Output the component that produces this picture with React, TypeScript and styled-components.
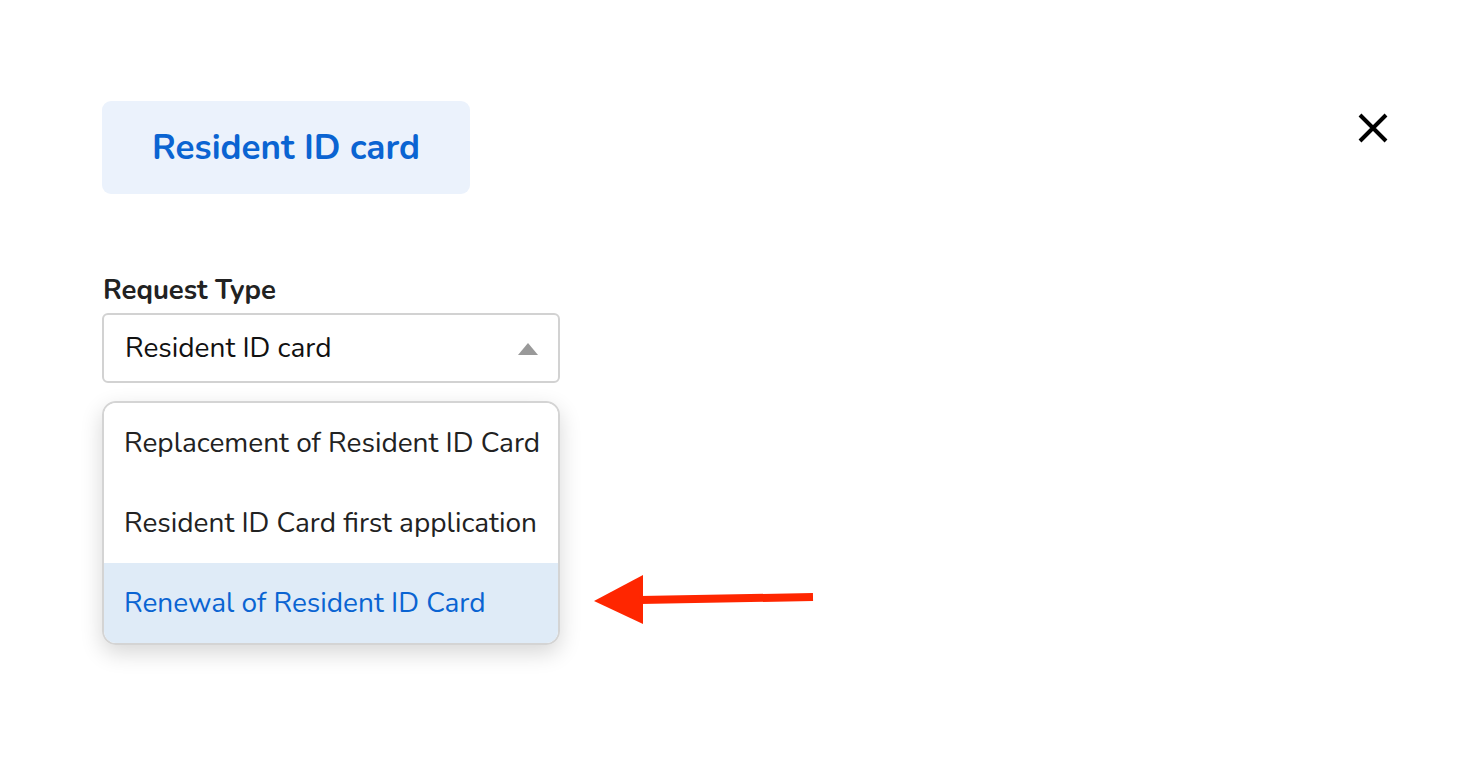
import React from "react";
import styled, { createGlobalStyle } from "styled-components";

const GlobalStyle = createGlobalStyle`
  html, body {
    margin: 0;
    padding: 0;
    background: #ffffff;
  }
  body {
    font-family: "Nunito", Lato, "Open Sans", sans-serif;
    color: #222222;
  }
`;

const Page = styled.div`
  position: relative;
  width: 1460px;
  height: 764px;
  box-sizing: border-box;
  padding: 101px 70px 0 102px;
`;

const Header = styled.div`
  display: flex;
  align-items: flex-start;
  justify-content: space-between;
`;

const TitlePill = styled.div`
  width: 368px;
  height: 93px;
  border-radius: 9px;
  background: #ebf2fc;
  color: #0a64d2;
  font-size: 35px;
  font-weight: 700;
  display: flex;
  align-items: center;
  justify-content: center;
`;

const CloseButton = styled.button`
  margin-top: 10px;
  width: 34px;
  height: 34px;
  padding: 0;
  border: none;
  background: transparent;
  display: flex;
  align-items: center;
  justify-content: center;
  cursor: pointer;
`;

const Field = styled.div`
  margin-top: 80px;
  width: 458px;
  display: flex;
  flex-direction: column;
`;

const Label = styled.div`
  font-size: 27.5px;
  font-weight: 700;
  color: #222222;
  line-height: 32px;
  margin-bottom: 7px;
  margin-left: 1px;
`;

const SelectBox = styled.div`
  height: 70px;
  box-sizing: border-box;
  border: 2px solid #d2d2d2;
  border-radius: 6px;
  display: flex;
  align-items: center;
  justify-content: space-between;
  padding: 0 20px 0 21px;
  font-size: 28px;
  color: #111111;
`;

const Caret = styled.span`
  width: 0;
  height: 0;
  border-left: 10px solid transparent;
  border-right: 10px solid transparent;
  border-bottom: 12px solid #999999;
  margin-top: 2px;
`;

const Menu = styled.ul`
  list-style: none;
  margin: 18px 0 0 0;
  padding: 0;
  border: 2px solid #d4d4d4;
  border-radius: 14px;
  overflow: hidden;
  box-shadow: 0 8px 22px rgba(0, 0, 0, 0.16);
`;

const Option = styled.li<{ $active?: boolean }>`
  height: 80px;
  display: flex;
  align-items: center;
  padding: 0 0 0 20px;
  font-size: 28px;
  color: ${(p) => (p.$active ? "#0a64d2" : "#222222")};
  background: ${(p) => (p.$active ? "#dfebf7" : "#ffffff")};
`;

const Pointer = styled.svg`
  position: absolute;
  left: 590px;
  top: 570px;
`;

const options = [
  "Replacement of Resident ID Card",
  "Resident ID Card first application",
  "Renewal of Resident ID Card",
];

const App: React.FC = () => {
  return (
    <Page>
      <GlobalStyle />
      <Header>
        <TitlePill>Resident ID card</TitlePill>
        <CloseButton aria-label="Close">
          <svg width="32" height="32" viewBox="0 0 32 32">
            <path d="M3 3 L29 29 M29 3 L3 29" stroke="#000" strokeWidth="4" />
          </svg>
        </CloseButton>
      </Header>
      <Field>
        <Label>Request Type</Label>
        <SelectBox>
          <span>Resident ID card</span>
          <Caret />
        </SelectBox>
        <Menu>
          {options.map((o, i) => (
            <Option key={o} $active={i === 2}>
              {o}
            </Option>
          ))}
        </Menu>
      </Field>
      <Pointer width="230" height="60" viewBox="0 0 230 60">
        <polygon points="4,31 53,5 53,54" fill="#ff2600" />
        <path d="M50 30 L223 27" stroke="#ff2600" strokeWidth="8" />
      </Pointer>
    </Page>
  );
};

export default App;
